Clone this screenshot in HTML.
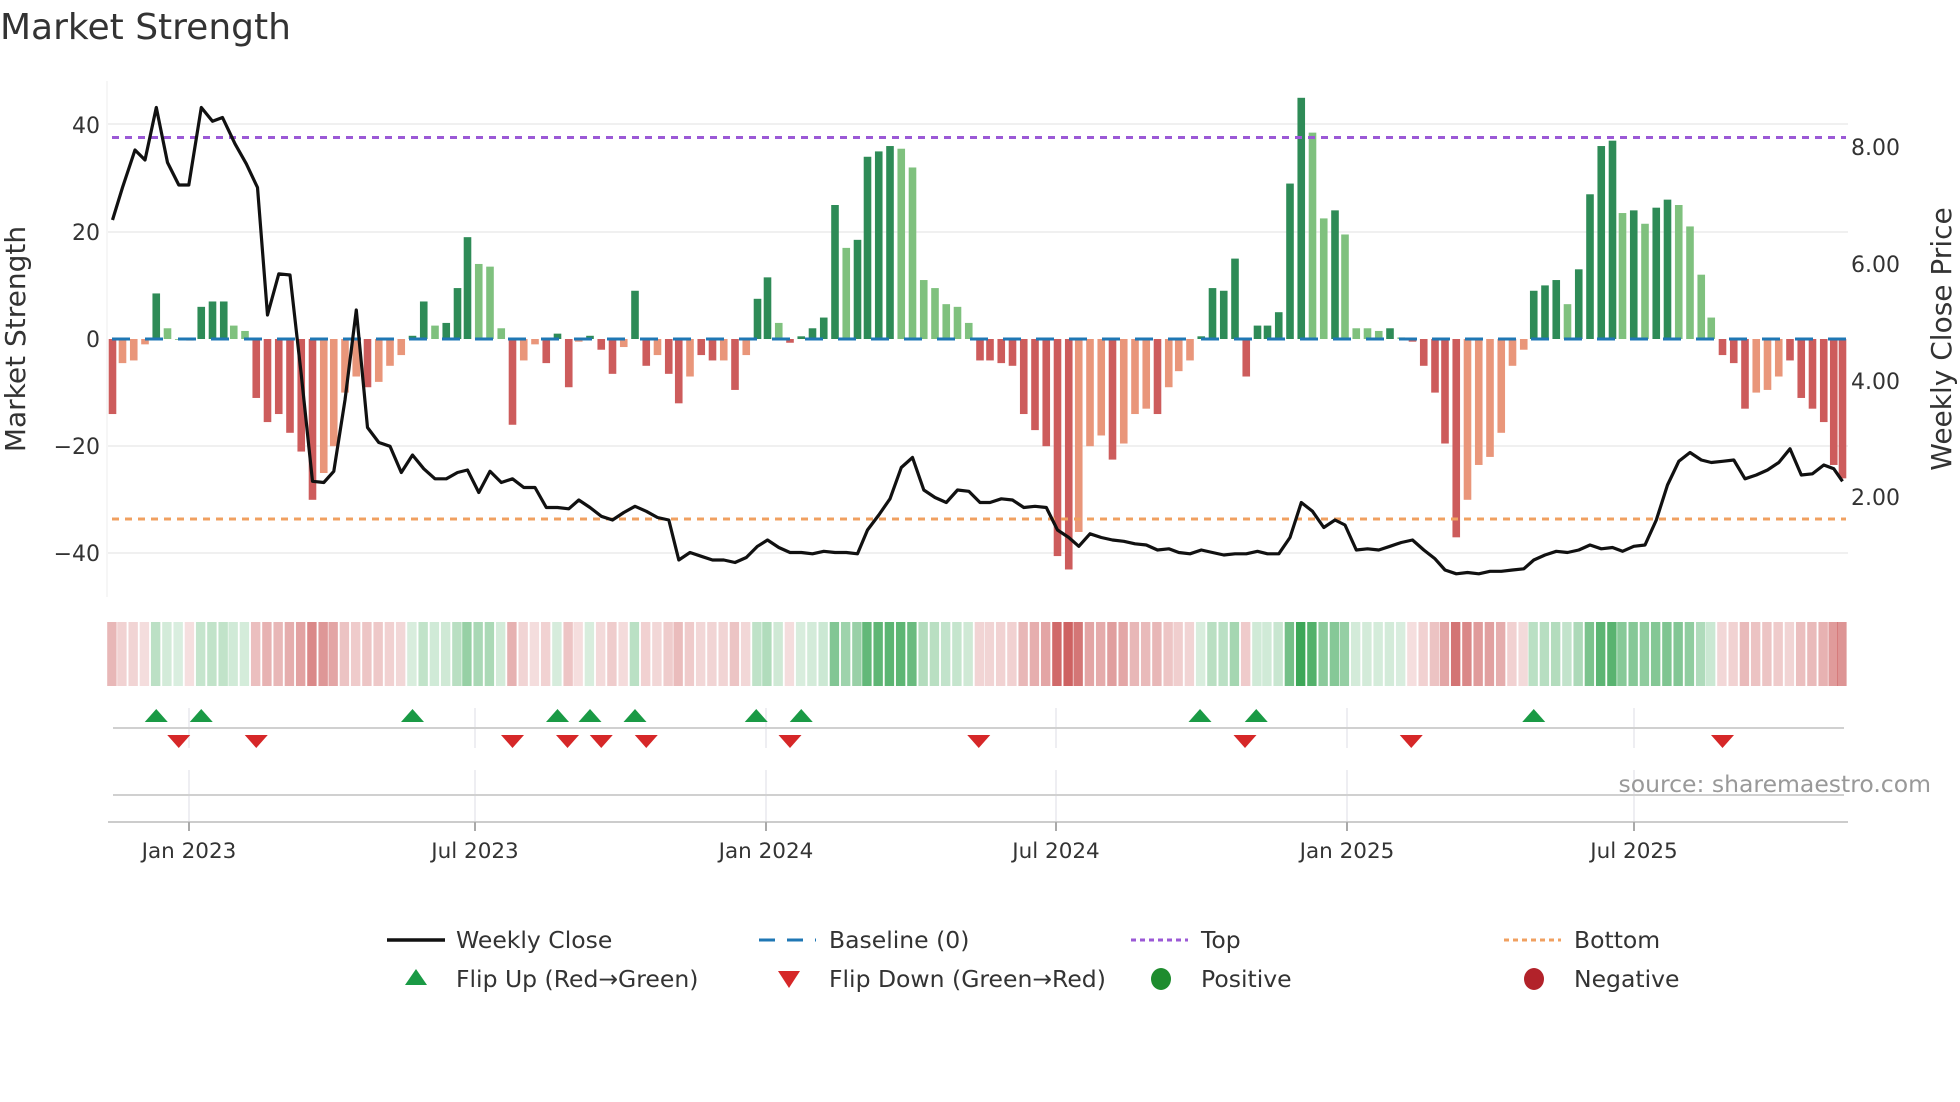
<!DOCTYPE html>
<html><head><meta charset="utf-8">
<style>
html,body{margin:0;padding:0;background:#fff;width:1960px;height:1102px;overflow:hidden}
svg{display:block}
text{font-family:"DejaVu Sans","Liberation Sans",sans-serif;fill:#333}
</style></head><body>
<svg id="s" width="1960" height="1102" viewBox="0 0 1960 1102" xmlns="http://www.w3.org/2000/svg">
<text x="0" y="39" font-size="36">Market Strength</text>
<g stroke="#ececec" stroke-width="1.5">
<line x1="108" y1="124" x2="1848" y2="124"/>
<line x1="108" y1="232" x2="1848" y2="232"/>
<line x1="108" y1="446" x2="1848" y2="446"/>
<line x1="108" y1="553" x2="1848" y2="553"/>
</g>
<line x1="107" y1="81" x2="107" y2="597" stroke="#eee" stroke-width="1"/>
<g id="bars"></g>
<line x1="112" y1="137.5" x2="1846" y2="137.5" stroke="#9b59d6" stroke-width="3" stroke-dasharray="7,6"/>
<line x1="112" y1="519" x2="1846" y2="519" stroke="#f0a060" stroke-width="3" stroke-dasharray="7,6"/>
<g id="base"></g>
<polyline id="price" fill="none" stroke="#111" stroke-width="3.2" stroke-linejoin="round"/>
<g font-size="22" text-anchor="end">
<text x="100" y="133">40</text>
<text x="100" y="240">20</text>
<text x="100" y="347">0</text>
<text x="100" y="454">−20</text>
<text x="100" y="561">−40</text>
</g>
<g font-size="22">
<text x="1851" y="155">8.00</text>
<text x="1851" y="272">6.00</text>
<text x="1851" y="389">4.00</text>
<text x="1851" y="505">2.00</text>
</g>
<text transform="translate(25,339) rotate(-90)" font-size="28" text-anchor="middle">Market Strength</text>
<text transform="translate(1951,339) rotate(-90)" font-size="28" text-anchor="middle">Weekly Close Price</text>
<g id="strip"></g>
<g stroke="#e8e8ee" stroke-width="1.5">
<line x1="189" y1="708" x2="189" y2="748"/><line x1="475" y1="708" x2="475" y2="748"/><line x1="766" y1="708" x2="766" y2="748"/><line x1="1056" y1="708" x2="1056" y2="748"/><line x1="1347" y1="708" x2="1347" y2="748"/><line x1="1634" y1="708" x2="1634" y2="748"/>
<line x1="189" y1="770" x2="189" y2="822"/><line x1="475" y1="770" x2="475" y2="822"/><line x1="766" y1="770" x2="766" y2="822"/><line x1="1056" y1="770" x2="1056" y2="822"/><line x1="1347" y1="770" x2="1347" y2="822"/><line x1="1634" y1="770" x2="1634" y2="822"/>
</g>
<line x1="113" y1="728" x2="1844" y2="728" stroke="#d0d0d0" stroke-width="2"/>
<line x1="113" y1="795" x2="1844" y2="795" stroke="#d0d0d0" stroke-width="2"/>
<line x1="108" y1="822" x2="1848" y2="822" stroke="#ccc" stroke-width="2"/>
<g stroke="#aaa" stroke-width="2">
<line x1="189" y1="822" x2="189" y2="831"/><line x1="475" y1="822" x2="475" y2="831"/><line x1="766" y1="822" x2="766" y2="831"/><line x1="1056" y1="822" x2="1056" y2="831"/><line x1="1347" y1="822" x2="1347" y2="831"/><line x1="1634" y1="822" x2="1634" y2="831"/>
</g>
<g id="marks"></g>
<text x="1931" y="792" font-size="23.5" style="fill:#999" text-anchor="end">source: sharemaestro.com</text>
<g font-size="21.5" text-anchor="middle">
<text x="189" y="858">Jan 2023</text><text x="475" y="858">Jul 2023</text><text x="766" y="858">Jan 2024</text><text x="1056" y="858">Jul 2024</text><text x="1347" y="858">Jan 2025</text><text x="1634" y="858">Jul 2025</text>
</g>
<g font-size="23.5">
<line x1="387" y1="940" x2="445" y2="940" stroke="#111" stroke-width="3.5"/>
<text x="456" y="948">Weekly Close</text>
<line x1="759" y1="940" x2="816" y2="940" stroke="#1f77b4" stroke-width="3" stroke-dasharray="16,12"/>
<text x="829" y="948">Baseline (0)</text>
<line x1="1131" y1="940" x2="1188" y2="940" stroke="#9b59d6" stroke-width="3" stroke-dasharray="5,4"/>
<text x="1201" y="948">Top</text>
<line x1="1504" y1="940" x2="1561" y2="940" stroke="#f0a060" stroke-width="3" stroke-dasharray="5,4"/>
<text x="1574" y="948">Bottom</text>
<polygon points="405,985 427,985 416,969" fill="#1a9a45"/>
<text x="456" y="987">Flip Up (Red→Green)</text>
<polygon points="778,971 800,971 789,988" fill="#d62728"/>
<text x="829" y="987">Flip Down (Green→Red)</text>
<ellipse cx="1161" cy="979" rx="10" ry="11" fill="#1e8c2e"/>
<text x="1201" y="987">Positive</text>
<ellipse cx="1534" cy="979" rx="10" ry="11" fill="#b2222a"/>
<text x="1574" y="987">Negative</text>
</g>
</svg>
<script>
(function(){
var NS="http://www.w3.org/2000/svg";
function el(p,t,a){var e=document.createElementNS(NS,t);for(var k in a)e.setAttribute(k,a[k]);p.appendChild(e);return e;}
var raw="90:-14:d,98:-4.5:l,107:-4:l,116:-1:l,125:8.5:d,134:2:l,143:0:l,152:-0.3:l,161:6:d,170:7:d,179:7:d,187:2.5:l,196:1.5:l,205:-11:d,214:-15.5:d,223:-14:d,232:-17.5:d,241:-21:d,250:-30:d,259:-25:l,267:-20:l,276:-10:l,285:-7:l,294:-9:d,303:-8:l,312:-5:l,321:-3:l,330:0.6:d,339:7:d,348:2.5:l,357:3:d,366:9.5:d,374:19:d,383:14:l,392:13.5:l,401:2:l,410:-16:d,419:-4:l,428:-1:l,437:-4.5:d,446:1:d,455:-9:d,463:-0.5:l,472:0.6:d,481:-2:d,490:-6.5:d,499:-1.5:l,508:9:d,517:-5:d,526:-3:l,535:-6.5:d,543:-12:d,552:-7:l,561:-3:d,570:-4:d,579:-4:l,588:-9.5:d,597:-3:l,606:7.5:d,614:11.5:d,623:3:l,632:-0.7:d,641:0.5:d,650:2:d,659:4:d,668:25:d,677:17:l,686:18.5:d,694:34:d,703:35:d,712:36:d,721:35.5:l,730:32:l,739:11:l,748:9.5:l,757:6.5:l,766:6:l,775:3:l,784:-4:d,792:-4:d,801:-4.5:d,810:-5:d,819:-14:d,828:-17:d,837:-20:d,846:-40.5:d,855:-43:d,863:-36:l,872:-20:l,881:-18:l,890:-22.5:d,899:-19.5:l,908:-14:l,917:-13:l,926:-14:d,935:-9:l,943:-6:l,952:-4:l,961:0.5:d,970:9.5:d,979:9:d,988:15:d,997:-7:d,1006:2.5:d,1014:2.5:d,1023:5:d,1032:29:d,1041:45:d,1050:38.5:l,1059:22.5:l,1068:24:d,1076:19.5:l,1085:2:l,1094:2:l,1103:1.5:l,1112:2:d,1121:0.3:l,1130:-0.5:d,1139:-5:d,1148:-10:d,1156:-19.5:d,1165:-37:d,1174:-30:l,1183:-23.5:l,1192:-22:l,1201:-17.5:l,1210:-5:l,1219:-2:l,1227:9:d,1236:10:d,1245:11:d,1254:6.5:l,1263:13:d,1272:27:d,1281:36:d,1290:37:d,1298:23.5:l,1307:24:d,1316:21.5:l,1325:24.5:d,1334:26:d,1343:25:l,1352:21:l,1361:12:l,1369:4:l,1378:-3:d,1387:-4.5:d,1396:-13:d,1405:-10:l,1414:-9.5:l,1423:-7:l,1432:-4:d,1441:-11:d,1450:-13:d,1459:-15.5:d,1467:-23.5:d,1474:-26:d";
var bars=document.getElementById("bars"),strip=document.getElementById("strip"),base=document.getElementById("base");
raw.split(",").forEach(function(s){
 var p=s.split(":"),xd=+p[0],v=+p[1],d=p[2]=="d";
 var cx=xd*1.25,y0=339,y=339-v*5.36;
 var col=v>=0?(d?"#2e8b57":"#7fc17e"):(d?"#cd5c5c":"#e9967a");
 el(bars,"rect",{x:cx-3.8,y:Math.min(y,y0),width:7.6,height:Math.max(Math.abs(y-y0),0.8),fill:col});
 var a=0.18+Math.min(Math.abs(v),45)/45*0.75;
 var sc=v>=0?"rgba(46,160,75,"+a+")":"rgba(200,80,80,"+a+")";
 el(strip,"rect",{x:cx-5.3,y:622,width:9.4,height:64,fill:sc});
});
el(base,"line",{x1:112,y1:339,x2:1846,y2:339,stroke:"#1f77b4","stroke-width":3,"stroke-dasharray":"18,15"});
var pr="90,176 98,150 108,120 116,128 125,86 134,130 143,148 151,148 161,86 170,97 178,94 188,115 197,131 206,150 214,252 223,219 232,220 241,300 250,385 259,386 267,377 276,320 285,248 294,342 303,354 312,357 321,378 330,364 339,375 348,383 357,383 366,378 374,376 383,394 392,377 401,386 410,383 419,390 428,390 437,406 446,406 455,407 463,400 472,406 481,413 490,416 499,410 508,405 517,409 526,414 535,416 543,448 552,442 561,445 570,448 579,448 588,450 597,446 606,437 614,432 623,438 632,442 641,442 650,443 659,441 668,442 677,442 686,443 694,424 703,412 712,399 721,374 730,366 739,392 748,398 757,402 766,392 775,393 784,402 792,402 801,399 810,400 819,406 828,405 837,406 846,424 855,430 863,437 872,427 881,430 890,432 899,433 908,435 917,436 926,440 935,439 943,442 952,443 961,440 970,442 979,444 988,443 997,443 1006,441 1014,443 1023,443 1032,430 1041,402 1050,409 1059,422 1068,416 1076,420 1085,440 1094,439 1103,440 1112,437 1121,434 1130,432 1139,440 1148,447 1156,456 1165,459 1174,458 1183,459 1192,457 1201,457 1210,456 1219,455 1227,448 1236,444 1245,441 1254,442 1263,440 1272,436 1281,439 1290,438 1298,441 1307,437 1316,436 1325,416 1334,388 1343,369 1352,362 1361,368 1369,370 1378,369 1387,368 1396,383 1405,380 1414,376 1423,370 1432,359 1441,380 1450,379 1459,372 1467,375 1474,385";
var pts=pr.split(" ").map(function(q){var a=q.split(",");return (a[0]*1.25).toFixed(1)+","+(a[1]*1.25).toFixed(1);}).join(" ");
document.getElementById("price").setAttribute("points",pts);
var m=document.getElementById("marks");
[125,161,330,446,472,508,605,641,960,1005,1227].forEach(function(x){var c=x*1.25;el(m,"polygon",{points:(c-11.5)+",722 "+(c+11.5)+",722 "+c+",709",fill:"#1a9a45"});});
[143,205,410,454,481,517,632,783,996,1129,1378].forEach(function(x){var c=x*1.25;el(m,"polygon",{points:(c-11.5)+",735 "+(c+11.5)+",735 "+c+",748",fill:"#d62728"});});
})();
</script>
</body></html>
